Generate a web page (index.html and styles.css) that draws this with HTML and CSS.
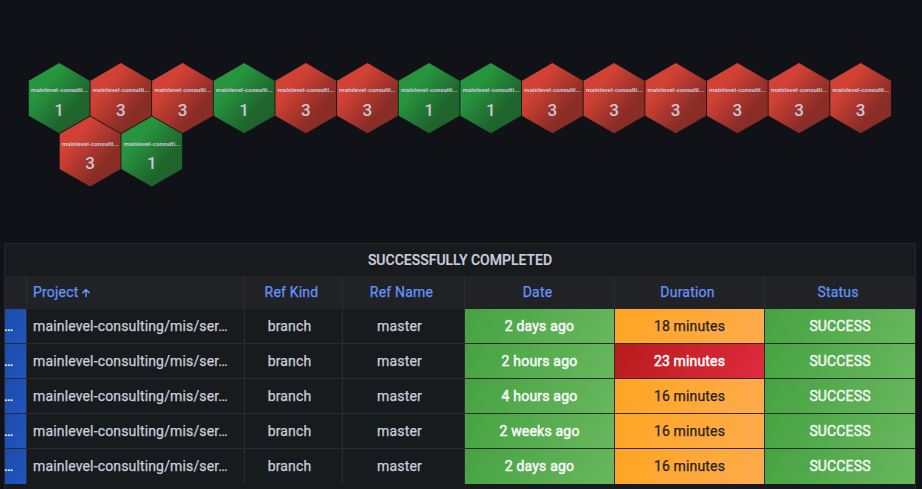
FILE: index.html
```
<!DOCTYPE html>
<html lang="en">
<head>
<meta charset="utf-8">
<title>Pipelines</title>
<link rel="stylesheet" href="styles.css">
</head>
<body>
<svg class="polystat" width="922" height="243" viewBox="0 0 922 243">
  <defs>
    <linearGradient id="red" x1="30%" y1="30%" x2="70%" y2="70%"><stop offset="0" stop-color="#d14134"/><stop offset="1" stop-color="#8a2d27"/></linearGradient>
    <linearGradient id="green" x1="30%" y1="30%" x2="70%" y2="70%"><stop offset="0" stop-color="#27953e"/><stop offset="1" stop-color="#1e642c"/></linearGradient>
    <path id="hex" d="M0-35.1 30.4-17.55V17.55L0 35.1-30.4 17.55V-17.55Z"/>
  </defs>
  <g id="cells"></g>
</svg>
<main class="panel">
  <h2 class="title">SUCCESSFULLY COMPLETED</h2>
  <div class="table" id="table">
    <div class="row head">
      <div class="cell"></div>
      <div class="cell project">Project<svg class="sort" width="10" height="10" viewBox="0 0 10 10"><path d="M5 8.5V1.8M1.8 4.8 5 1.6 8.2 4.8"/></svg></div>
      <div class="cell kind">Ref Kind</div>
      <div class="cell name">Ref Name</div>
      <div class="cell date">Date</div>
      <div class="cell duration">Duration</div>
      <div class="cell status">Status</div>
    </div>
  </div>
</main>
<script src="script.js"></script>
</body>
</html>
```
FILE: styles.css
```
* { box-sizing: border-box; }
body {
  margin: 0;
  height: 489px;
  overflow: hidden;
  background: #111217;
  color: #ccccdc;
  font: 400 14px/20px Roboto, sans-serif;
  letter-spacing: 0.15px;
}
.polystat { display: block; }
.hex-red { fill: url(#red); }
.hex-green { fill: url(#green); }
.hex-label, .hex-value { fill: #c9c8d9; text-anchor: middle; }
.hex-label { font-size: 6px; font-weight: 500; letter-spacing: 0.13px; stroke: #c9c8d9; stroke-width: 0.15px; }
.hex-value { font-size: 17px; font-weight: 500; letter-spacing: 0; }
.panel {
  width: 912px;
  height: 260px;
  margin-left: 4px;
  border: 1px solid #25272b;
  border-radius: 2px;
  background: #171b1e;
}
.title {
  height: 32px;
  margin: 0;
  font-size: 14px;
  font-weight: 500;
  line-height: 32px;
  letter-spacing: 0;
  text-align: center;
  -webkit-text-stroke: 0.2px;
}
.row {
  display: grid;
  grid-template-columns: 22px 218px 98px 122px 150px 150px 150px;
  height: 35px;
}
.cell {
  display: flex;
  align-items: center;
  justify-content: center;
  min-width: 0;
  white-space: nowrap;
  border-right: 1px solid #2a2c31;
  border-bottom: 1px solid #2a2c31;
  -webkit-text-stroke: 0.25px;
}
.cell:last-child { border-right: 0; }
.project { justify-content: flex-start; padding-left: 6px; }
.kind { padding-right: 8px; }
.name { padding-right: 8px; }
.head { height: 33px; background: #212226; color: #6394fa; }
.head .cell { border-bottom: 0; padding-bottom: 1px; letter-spacing: 0.2px; }
.head .kind { padding-right: 4px; }
.head .name { padding-right: 4px; }
.head .date, .head .duration, .head .status { padding-right: 4px; }
.sort { margin: 2px 0 0 2px; }
.sort path { fill: none; stroke: #6394fa; stroke-width: 1.5; stroke-linecap: round; stroke-linejoin: round; }
.body .link {
  justify-content: flex-start;
  text-indent: -1px;
  color: #fff;
  background: linear-gradient(120deg, #1d4ba8, #1f57c2);
}
.body .date, .body .status {
  color: #f7f8fa;
  background: linear-gradient(120deg, #46a340, #68b75e);
}
.body .date { letter-spacing: 0.2px; -webkit-text-stroke: 0.5px; }
.body .status { -webkit-text-stroke: 0.4px; }
.body .duration {
  color: #202226;
  background: linear-gradient(120deg, #ffa521, #ffab4e);
}
.body .duration.long {
  color: #fff;
  -webkit-text-stroke: 0.5px;
  background: linear-gradient(120deg, #b71c1c, #e02b3f);
}
.body .link, .body .date, .body .duration, .body .status { background-clip: padding-box; }
.row:last-child .cell { border-bottom: 0; padding-bottom: 1px; }
```
FILE: script.js
```
const values = [1, 3, 3, 1, 3, 3, 1, 1, 3, 3, 3, 3, 3, 3, 3, 1];
document.getElementById('cells').innerHTML = values.map((value, i) => {
  const second = i >= 14;
  const x = second ? 90.1 + (i - 14) * 61.65 : 59.2 + i * 61.65;
  const y = second ? 151.5 : 98.2;
  return `<g transform="translate(${x} ${y})">
    <use href="#hex" class="${value === 1 ? 'hex-green' : 'hex-red'}"/>
    <text class="hex-label" x="0.3" y="${second ? -5.5 : -6.2}">mainlevel-consulti...</text>
    <text class="hex-value" y="${second ? 17.3 : 17.8}">${value}</text></g>`;
}).join('');

const rows = [['2 days ago', 18], ['2 hours ago', 23], ['4 hours ago', 16], ['2 weeks ago', 16], ['2 days ago', 16]];
document.getElementById('table').insertAdjacentHTML('beforeend', rows.map(([date, minutes]) => `
  <div class="row body">
    <div class="cell link">…</div>
    <div class="cell project">mainlevel-consulting/mis/ser…</div>
    <div class="cell kind">branch</div>
    <div class="cell name">master</div>
    <div class="cell date">${date}</div>
    <div class="cell duration${minutes > 20 ? ' long' : ''}">${minutes} minutes</div>
    <div class="cell status">SUCCESS</div>
  </div>`).join(''));
```
